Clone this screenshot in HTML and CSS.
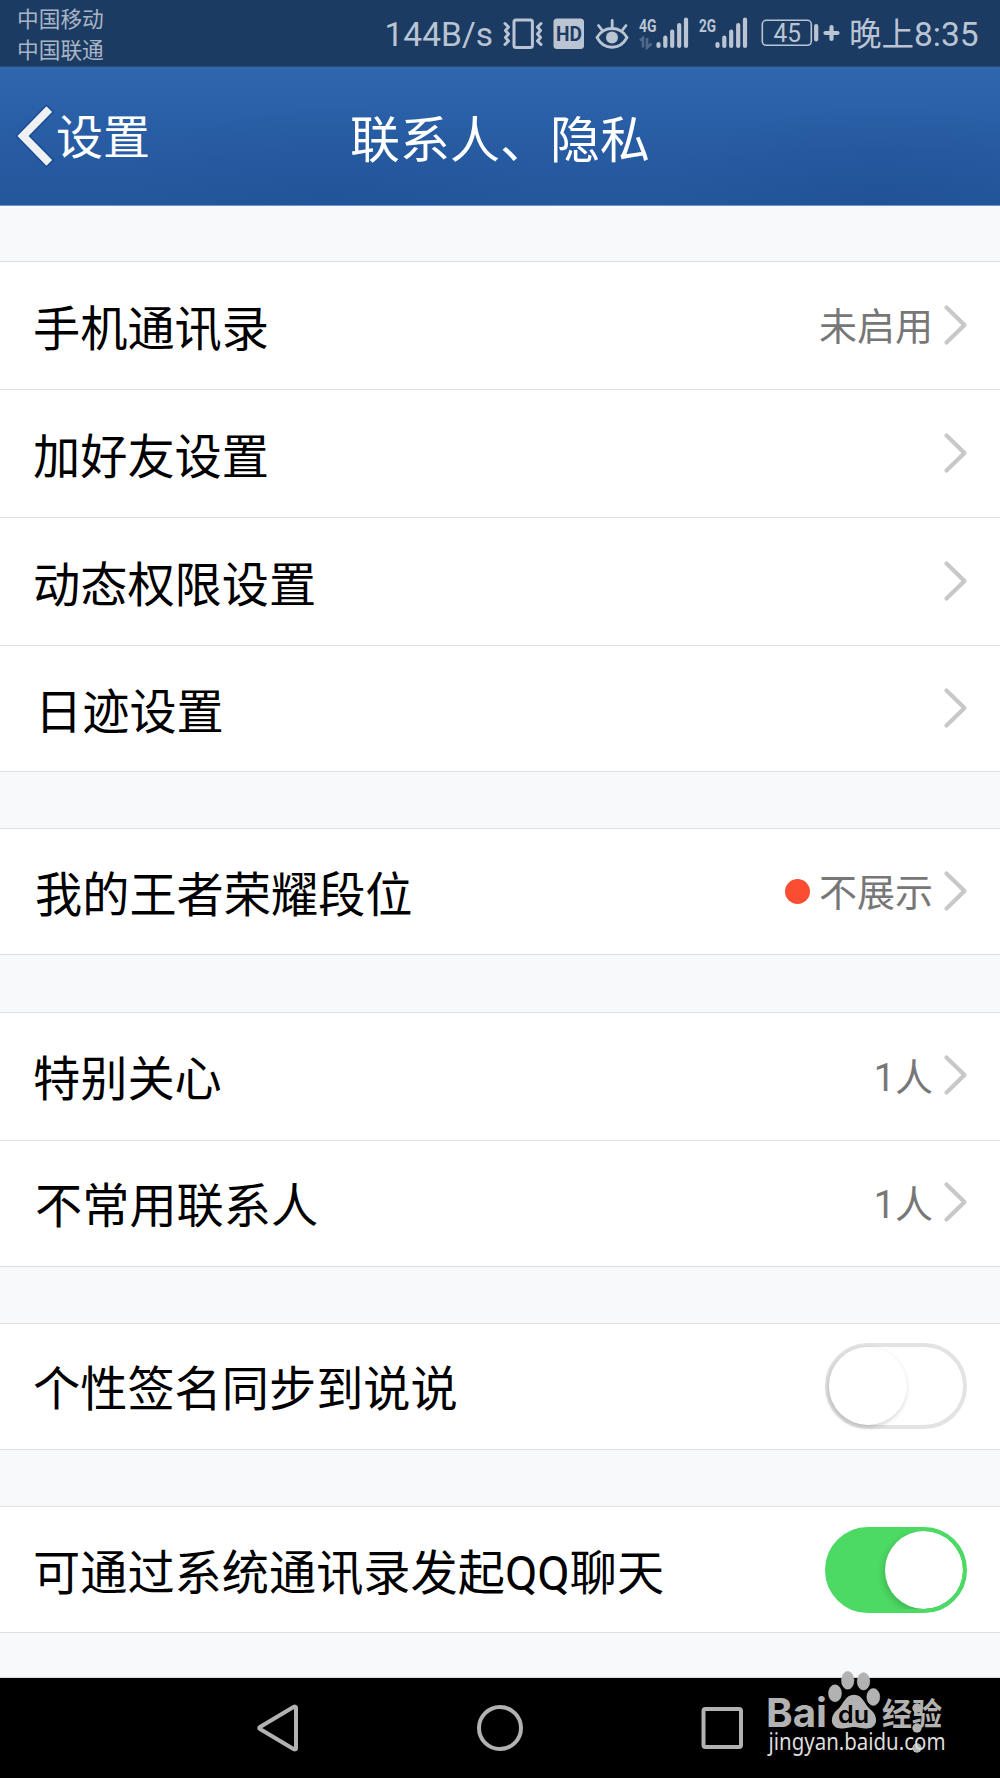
FILE: index.html
```html
<!DOCTYPE html>
<html lang="zh-CN">
<head>
  <meta charset="utf-8">
  <title>联系人、隐私</title>
  <link rel="stylesheet" href="styles.css">
</head>
<body>
  <div class="status-bar">
    <div class="carriers">
      <div>中国移动</div>
      <div>中国联通</div>
    </div>
    <div class="status-icons">
      <span class="speed">144B/s</span>
      <!-- vibrate -->
      <svg class="vibrate" width="42" height="66" viewBox="0 0 42 66">
        <rect x="12" y="20" width="18.4" height="27.5" rx="2"/>
        <path d="M3 23.5L6.5 27L3.5 30.5L6.5 34L3.5 37.5L6.5 41L3 44.5M39 23.5L35.5 27L38.5 30.5L35.5 34L38.5 37.5L35.5 41L39 44.5"/>
      </svg>
      <!-- HD -->
      <svg class="hd" width="32" height="66" viewBox="0 0 32 66">
        <rect x="0.5" y="18.5" width="30.5" height="30.5" rx="3.5"/>
        <text x="3" y="40.5" textLength="26" lengthAdjust="spacingAndGlyphs">HD</text>
      </svg>
      <!-- eye comfort -->
      <svg class="eye" width="36" height="66" viewBox="0 0 36 66">
        <path d="M3 37.5C10 25.500 26 25.500 33 37.500C26 50.500 10 50.500 3 37.500ZM18.200 20.500V27M4.500 25.500L8 30M32 25.500L28.500 30"/>
        <circle cx="18" cy="37.500" r="6"/>
      </svg>
      <!-- signal, sim 1 -->
      <svg class="signal" width="52" height="66" viewBox="0 0 52 66">
        <text x="1" y="31.500" textLength="17.500" lengthAdjust="spacingAndGlyphs">4G</text>
        <path class="bars" d="M20.500 44V46M27.300 37.500V46M34.200 31.500V46M41.200 25V46M48 19.500V46"/>
        <path class="data" d="M2 40.500L5 38V47.500M9 38V47.500L13.500 43.500"/>
      </svg>
      <!-- signal, sim 2 -->
      <svg class="signal" width="51" height="66" viewBox="0 0 51 66">
        <text x="1" y="31.500" textLength="17" lengthAdjust="spacingAndGlyphs">2G</text>
        <path class="bars" d="M19.500 44V46M26.300 37.500V46M33.200 31.500V46M40.200 25V46M47 19.500V46"/>
      </svg>
      <!-- battery -->
      <svg class="battery" width="81" height="66" viewBox="0 0 81 66">
        <rect x="2.300" y="20.300" width="49" height="25" rx="4"/>
        <path d="M56.200 26V39.500M65.500 33H77.500M71.500 27V39"/>
        <text x="13.500" y="41.500" textLength="27.500" lengthAdjust="spacingAndGlyphs">45</text>
      </svg>
      <span class="clock"><span class="daytime">晚上</span>8:35</span>
    </div>
  </div>

  <div class="header">
    <div class="back">
      <svg width="40" height="66" viewBox="0 0 40 66">
        <path class="back-edge" d="M31.500 9L8 33L31.500 57"/>
        <path class="back-arrow" d="M31.500 9L8 33L31.500 57"/>
      </svg>
      <span>设置</span>
    </div>
    <div class="title">联系人、隐私</div>
  </div>

  <div class="content">
    <div class="group">
      <div class="row">
        <span class="label">手机通讯录</span>
        <span class="value">未启用</span>
        <svg class="arrow" width="26" height="44" viewBox="0 0 26 44"><path d="M3.500 4.500L21.500 22L3.500 39.500"/></svg>
      </div>
      <div class="row">
        <span class="label">加好友设置</span>
        <svg class="arrow" width="26" height="44" viewBox="0 0 26 44"><path d="M3.500 4.500L21.500 22L3.500 39.500"/></svg>
      </div>
      <div class="row">
        <span class="label">动态权限设置</span>
        <svg class="arrow" width="26" height="44" viewBox="0 0 26 44"><path d="M3.500 4.500L21.500 22L3.500 39.500"/></svg>
      </div>
      <div class="row">
        <span class="label indent">日迹设置</span>
        <svg class="arrow" width="26" height="44" viewBox="0 0 26 44"><path d="M3.500 4.500L21.500 22L3.500 39.500"/></svg>
      </div>
    </div>

    <div class="group">
      <div class="row">
        <span class="label indent">我的王者荣耀段位</span>
        <span class="dot"></span>
        <span class="value">不展示</span>
        <svg class="arrow" width="26" height="44" viewBox="0 0 26 44"><path d="M3.500 4.500L21.500 22L3.500 39.500"/></svg>
      </div>
    </div>

    <div class="group">
      <div class="row">
        <span class="label">特别关心</span>
        <span class="value">1人</span>
        <svg class="arrow" width="26" height="44" viewBox="0 0 26 44"><path d="M3.500 4.500L21.500 22L3.500 39.500"/></svg>
      </div>
      <div class="row">
        <span class="label indent">不常用联系人</span>
        <span class="value">1人</span>
        <svg class="arrow" width="26" height="44" viewBox="0 0 26 44"><path d="M3.500 4.500L21.500 22L3.500 39.500"/></svg>
      </div>
    </div>

    <div class="group">
      <div class="row">
        <span class="label">个性签名同步到说说</span>
        <span class="switch"><span class="knob"></span></span>
      </div>
    </div>

    <div class="group">
      <div class="row">
        <span class="label">可通过系统通讯录发起QQ聊天</span>
        <span class="switch on"><span class="knob"></span></span>
      </div>
    </div>
  </div>

  <div class="nav-bar">
    <svg width="48" height="50" viewBox="0 0 48 50"><path d="M42 4.500V45.500Q41.500 47 39.500 46L6 26Q4.500 25 6 24L39.500 4Q41.500 3 42 4.500Z"/></svg>
    <svg width="48" height="50" viewBox="0 0 48 50"><ellipse cx="24" cy="25" rx="21" ry="21"/></svg>
    <svg width="48" height="50" viewBox="0 0 48 50"><rect x="4.500" y="6" width="37.500" height="38" rx="2"/></svg>
  </div>

  <svg class="more" width="12" height="52" viewBox="0 0 12 52">
    <circle cx="6" cy="6" r="4.700"/>
    <circle cx="6" cy="26" r="4.700"/>
    <circle cx="6" cy="46" r="4.700"/>
  </svg>

  <!-- watermark -->
  <svg class="watermark" width="184" height="92" viewBox="0 0 184 92">
    <text class="wm-bai" x="2" y="59" textLength="61" lengthAdjust="spacingAndGlyphs">Bai</text>
    <ellipse cx="71" cy="25.300" rx="6.500" ry="8.500"/>
    <ellipse cx="83.700" cy="12.300" rx="6.300" ry="9"/>
    <ellipse cx="99.500" cy="13.300" rx="6.300" ry="8.700"/>
    <ellipse cx="109.300" cy="29" rx="6.500" ry="8.500"/>
    <path d="M90 26.700C99 26.700 100 36 107 42C115 49 113.500 60.500 103 60.500C97 60.500 94 59 90 59C86 59 83 60.500 77 60.500C66.500 60.500 65 49 73 42C80 36 81 26.700 90 26.700Z"/>
    <text class="wm-du" x="74" y="54.500" textLength="31" lengthAdjust="spacingAndGlyphs">du</text>
    <text class="wm-cn" x="118" y="56.500" textLength="60" lengthAdjust="spacingAndGlyphs">经验</text>
    <text class="wm-url" x="4.500" y="82" textLength="177" lengthAdjust="spacingAndGlyphs">jingyan.baidu.com</text>
  </svg>
</body>
</html>
```

FILE: styles.css
```css
* {
  box-sizing: border-box;
}

body {
  margin: 0;
  width: 1000px;
  height: 1778px;
  position: relative;
  overflow: hidden;
  display: flex;
  flex-direction: column;
  background-color: #f8f9fb;
  font-family: Roboto, "Noto Sans CJK SC", sans-serif;
  color: #000;
}

svg {
  display: block;
  flex: none;
}

/* status bar */
.status-bar {
  flex: none;
  height: 67px;
  padding: 0 22px 0 17px;
  display: flex;
  justify-content: space-between;
  background-color: #1c3b63;
  border-bottom: 1px solid #234a7c;
  color: #bac4d2;
}

.carriers {
  padding-top: 5px;
  font-size: 21.7px;
  line-height: 30.5px;
  color: #a9b5c5;
}

.status-icons {
  display: flex;
  font-size: 33.5px;
  line-height: 70px;
  white-space: nowrap;
}

.status-icons text {
  fill: #bac4d2;
}

.speed {
  margin-right: 9px;
}

.vibrate {
  margin-right: 9px;
  fill: none;
  stroke: #bac4d2;
  stroke-width: 3;
  stroke-linejoin: round;
  stroke-linecap: round;
}

.hd {
  margin-right: 9px;
  fill: #bac4d2;
}

.status-icons .hd text {
  fill: #1c3b63;
  font-size: 19.5px;
  font-weight: 700;
}

.eye {
  margin-right: 8px;
  fill: none;
  stroke: #bac4d2;
  stroke-width: 2.8;
  stroke-linecap: round;
}

.eye circle {
  fill: #bac4d2;
  stroke: none;
}

.signal {
  margin-right: 8px;
}

.signal + .battery {
  margin-left: 3px;
}

.signal text {
  font-size: 19px;
  font-weight: 700;
}

.bars {
  stroke: #bac4d2;
  stroke-width: 4.2;
  stroke-linecap: round;
}

.data {
  fill: none;
  stroke: #50688a;
  stroke-width: 2.6;
}

.battery {
  margin-right: 8px;
  fill: none;
  stroke: #bac4d2;
  stroke-width: 1.6;
}

.battery path {
  stroke-width: 4.2;
  stroke-linecap: round;
}

.battery text {
  stroke: none;
  font-size: 25.5px;
}

.clock {
  width: 129px;
  text-align: right;
}

.daytime {
  font-size: 32.5px;
}

/* title bar */
.header {
  flex: none;
  height: 139px;
  position: relative;
  display: flex;
  align-items: center;
  justify-content: center;
  background:
    radial-gradient(ellipse 220px 90px at 330px 130px, rgba(24, 70, 140, 0.2), transparent),
    radial-gradient(ellipse 220px 90px at 880px 130px, rgba(24, 70, 140, 0.3), transparent),
    linear-gradient(#2f66ae, #285da4 50%, #24579b);
  border-bottom: 1px solid #6d97d2;
  color: #fff;
}

.back {
  position: absolute;
  left: 15px;
  top: 0;
  height: 138px;
  display: flex;
  align-items: center;
  font-size: 47px;
  line-height: 60px;
}

.back span {
  margin-left: 1px;
  padding-top: 3px;
}

.back path {
  fill: none;
  stroke-linecap: square;
}

.back-edge {
  stroke: #164b96;
  stroke-width: 11;
}

.back-arrow {
  stroke: #eef0f2;
  stroke-width: 8;
}

.title {
  padding-top: 9px;
  font-size: 50px;
  line-height: 60px;
}

/* list */
.content {
  flex: 1;
  border-bottom: 1px solid #dcdcdc;
}

.group {
  margin-top: 56.25px;
  background-color: #fff;
  border-top: 1px solid #dfe0e2;
}

.group:first-child {
  margin-top: 55px;
}

.row {
  height: 128px;
  padding: 0 31px 0 33px;
  display: flex;
  align-items: center;
  border-bottom: 1px solid #dfe0e2;
}

.row:last-child {
  height: 126px;
}

.label {
  flex: 1;
  padding-top: 8px;
  font-size: 47.2px;
  line-height: 60px;
}

.label.indent {
  padding-left: 2px;
}

.value {
  padding-top: 3px;
  font-size: 38px;
  line-height: 50px;
  color: #777;
}

.dot {
  width: 25px;
  height: 25px;
  margin-right: 9px;
  border-radius: 50%;
  background-color: #fb4d32;
}

.arrow {
  margin-left: 10px;
  margin-bottom: 2px;
}

.arrow path {
  fill: none;
  stroke: #c8c8c8;
  stroke-width: 4.2;
  stroke-linecap: round;
  stroke-linejoin: round;
}

.switch {
  width: 142px;
  height: 86px;
  margin-right: 2px;
  border: 4px solid #e3e3e3;
  border-radius: 43px;
}

.knob {
  display: block;
  width: 78px;
  height: 78px;
  border-radius: 50%;
  background-color: #fff;
  box-shadow: -1px 2px 5px rgba(0, 0, 0, 0.2);
}

.switch.on {
  border-color: #4cd964;
  background-color: #4cd964;
  overflow: hidden;
}

.switch.on .knob {
  margin-left: 56px;
  box-shadow: -2px 3px 6px rgba(0, 0, 0, 0.15);
}

/* system navigation */
.nav-bar {
  flex: none;
  height: 100px;
  display: flex;
  align-items: center;
  justify-content: center;
  gap: 174.5px;
  background-color: #000;
}

.nav-bar svg {
  fill: none;
  stroke: #b2b2b2;
  stroke-width: 4;
}

.more {
  position: absolute;
  left: 911px;
  top: 1702px;
  fill: #b2b2b2;
}

.watermark {
  position: absolute;
  left: 764px;
  top: 1668px;
  overflow: visible;
  fill: #b2b2b2;
}

.watermark ellipse {
  stroke: rgba(190, 190, 190, 0.5);
}

.wm-bai {
  font-family: Inter, sans-serif;
  font-size: 40px;
  font-weight: 700;
}

.wm-du {
  fill: #000;
  font-family: Inter, sans-serif;
  font-size: 24px;
  font-weight: 600;
}

.wm-cn {
  font-family: "Noto Sans CJK SC", sans-serif;
  font-size: 31px;
  font-weight: 700;
}

.wm-url {
  fill: #dedede;
  font-family: "Noto Sans", sans-serif;
  font-size: 23px;
}
```
